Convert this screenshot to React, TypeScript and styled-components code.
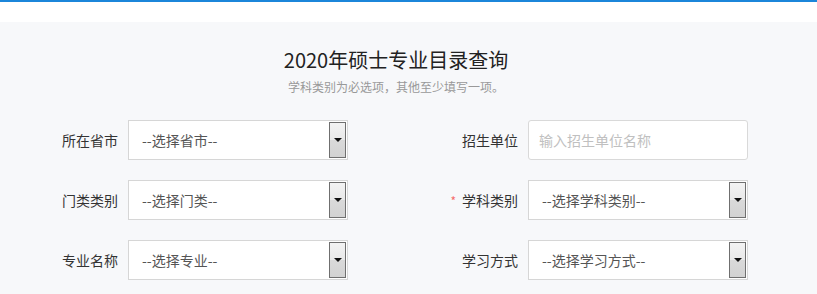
import styled, { createGlobalStyle } from "styled-components";

const GlobalStyle = createGlobalStyle`
  html, body {
    margin: 0;
    padding: 0;
    background: #f7f8fa;
    font-family: "Noto Sans CJK SC", "Noto Sans", sans-serif;
  }
`;

const TopBar = styled.div`
  height: 20px;
  background: #fff;
  border-top: 2px solid #1b86da;
`;

const Main = styled.main`
  background: #f7f8fa;
  padding: 26px 0 20px 0;
`;

const Header = styled.div`
  width: 792px;
  text-align: center;
`;

const Title = styled.h1`
  margin: 0;
  font-size: 20px;
  line-height: 24px;
  font-weight: normal;
  color: #222;
`;

const Hint = styled.p`
  margin: 6px 0 0 0;
  font-size: 12px;
  line-height: 18px;
  color: #999;
`;

const Form = styled.div`
  margin-top: 24px;
  padding-left: 8px;
  display: grid;
  grid-template-columns: 340px 340px;
  column-gap: 60px;
  row-gap: 20px;
`;

const Field = styled.div`
  display: flex;
  align-items: center;
  gap: 10px;
`;

const Label = styled.label`
  width: 110px;
  text-align: right;
  font-size: 14px;
  color: #333;
`;

const Star = styled.span`
  color: #f56c6c;
  font-size: 12px;
  margin-right: 6px;
`;

const SelectBox = styled.div`
  box-sizing: border-box;
  width: 220px;
  height: 40px;
  border: 1px solid #d6d6d6;
  background: #fff;
  display: flex;
  align-items: center;
  justify-content: space-between;
  padding: 1px 1px 1px 13px;
`;

const Value = styled.span`
  font-size: 14px;
  color: #555;
`;

const ArrowButton = styled.span`
  box-sizing: border-box;
  width: 17px;
  height: 36px;
  border: 1px solid #6f6f6f;
  background: linear-gradient(#f3f3f3 0%, #e8e8e8 50%, #d9d9d9 51%, #d2d2d2 100%);
  display: flex;
  align-items: center;
  justify-content: center;

  &::after {
    content: "";
    width: 0;
    height: 0;
    border-left: 4px solid transparent;
    border-right: 4px solid transparent;
    border-top: 4px solid #111;
  }
`;

const TextInput = styled.input`
  box-sizing: border-box;
  width: 220px;
  height: 40px;
  border: 1px solid #d9d9d9;
  border-radius: 3px;
  background: #fff;
  padding: 0 10px;
  font-family: inherit;
  font-size: 14px;
  color: #333;
  outline: none;

  &::placeholder {
    color: #c0c0c0;
  }
`;

function Select({ value }: { value: string }) {
  return (
    <SelectBox>
      <Value>{value}</Value>
      <ArrowButton />
    </SelectBox>
  );
}

export default function App() {
  return (
    <>
      <GlobalStyle />
      <TopBar />
      <Main>
        <Header>
          <Title>2020年硕士专业目录查询</Title>
          <Hint>学科类别为必选项，其他至少填写一项。</Hint>
        </Header>
        <Form>
          <Field>
            <Label>所在省市</Label>
            <Select value="--选择省市--" />
          </Field>
          <Field>
            <Label>招生单位</Label>
            <TextInput placeholder="输入招生单位名称" />
          </Field>
          <Field>
            <Label>门类类别</Label>
            <Select value="--选择门类--" />
          </Field>
          <Field>
            <Label>
              <Star>*</Star>学科类别
            </Label>
            <Select value="--选择学科类别--" />
          </Field>
          <Field>
            <Label>专业名称</Label>
            <Select value="--选择专业--" />
          </Field>
          <Field>
            <Label>学习方式</Label>
            <Select value="--选择学习方式--" />
          </Field>
        </Form>
      </Main>
    </>
  );
}
